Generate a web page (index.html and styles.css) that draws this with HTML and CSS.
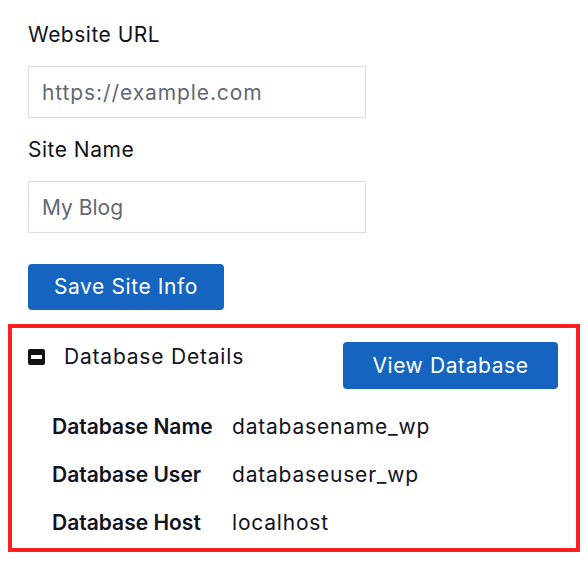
FILE: index.html
```html
<!DOCTYPE html>
<html lang="en">
<head>
<meta charset="utf-8">
<title>Site Info</title>
<link rel="stylesheet" href="styles.css">
</head>
<body>
<div class="page">
  <form class="site-form">
    <label class="field-label" for="url">Website URL</label>
    <input class="field-input input-url" id="url" type="text" placeholder="https://example.com">
    <label class="field-label" for="name">Site Name</label>
    <input class="field-input input-name" id="name" type="text" placeholder="My Blog">
    <button class="btn btn-save" type="button">Save Site Info</button>
  </form>
  <section class="db-panel">
    <div class="db-header">
      <div class="db-title">
        <span class="toggle-icon"><span class="toggle-bar"></span></span>
        <span class="db-title-text">Database Details</span>
      </div>
      <button class="btn btn-view" type="button">View Database</button>
    </div>
    <div class="db-rows">
      <div class="db-key">Database Name</div><div class="db-val">databasename_wp</div>
      <div class="db-key">Database User</div><div class="db-val">databaseuser_wp</div>
      <div class="db-key">Database Host</div><div class="db-val">localhost</div>
    </div>
  </section>
</div>
</body>
</html>
```

FILE: styles.css
```css
* { box-sizing: border-box; }
html, body { margin: 0; background: #ffffff; }
body {
  font-family: Inter, "Noto Sans", sans-serif;
  color: #121222;
  font-size: 21px;
  line-height: 30px;
}
.page {
  padding: 19px 8px 12px 8px;
}
.site-form {
  display: flex;
  flex-direction: column;
  align-items: flex-start;
  padding: 0 20px;
}
.field-label {
  display: block;
  padding-top: 1px;
  margin-bottom: 16px;
  letter-spacing: 0.5px;
}
.field-input {
  width: 338px;
  height: 52px;
  border: 1px solid #dddde5;
  border-radius: 0;
  padding: 0 13px;
  font: inherit;
  color: #121222;
  margin-bottom: 16px;
  outline: none;
}
.input-url { letter-spacing: 0.9px; }
.input-name { letter-spacing: 0; margin-bottom: 31px; }
.field-input::placeholder { color: #626874; opacity: 1; }
.btn {
  font: inherit;
  color: #ffffff;
  background: #1565c0;
  border: none;
  border-radius: 4px;
  cursor: pointer;
  letter-spacing: 0.6px;
}
.btn-save {
  width: 196px;
  height: 46px;
}
.db-panel {
  margin-top: 14px;
  border: 4px solid #ff2121;
  padding: 14px 18px 1px 16px;
}
.db-header {
  display: flex;
  justify-content: space-between;
  align-items: flex-start;
}
.db-title {
  display: flex;
  align-items: center;
  gap: 19px;
}
.db-title-text {
  letter-spacing: 0.8px;
}
.toggle-icon {
  width: 17px;
  height: 16px;
  background: #111118;
  border-radius: 2px;
  display: flex;
  align-items: center;
  justify-content: center;
}
.toggle-bar {
  width: 11px;
  height: 4px;
  background: #ffffff;
}
.btn-view {
  width: 215px;
  height: 47px;
}
.db-rows {
  display: grid;
  grid-template-columns: 180px auto;
  margin-top: 14px;
  padding-left: 24px;
}
.db-key, .db-val {
  padding: 9px 0;
}
.db-key {
  font-weight: 600;
  letter-spacing: 0;
}
.db-val {
  letter-spacing: 0.8px;
}
```
